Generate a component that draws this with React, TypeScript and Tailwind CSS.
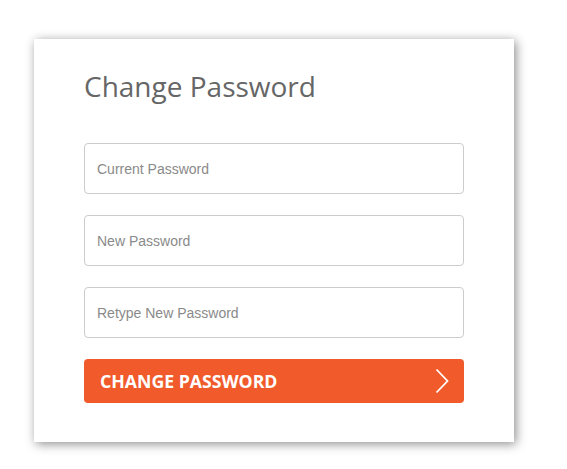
const fields = ["Current Password", "New Password", "Retype New Password"];

const App = () => {
    return (
        <div className="min-h-[469px] w-[567px] bg-white pt-[39px] pl-[34px]">
            <div className="w-[480px] bg-white px-[50px] pt-[28px] pb-[39px] shadow-[2px_2px_10px_rgba(0,0,0,0.45)]">
                <h1 className="font-['Open_Sans',sans-serif] text-[28px] leading-[38px] text-[#666666]">
                    Change Password
                </h1>
                <form className="mt-[38px] flex flex-col gap-[21px]">
                    {fields.map((f) => (
                        <input
                            key={f}
                            type="password"
                            placeholder={f}
                            className="h-[51px] w-full rounded-[4px] border border-[#cccccc] px-3 font-['Liberation_Sans',Arial,sans-serif] text-[14px] text-[#555] placeholder:text-[#8a8a8a] focus:outline-none"
                        />
                    ))}
                    <button
                        type="button"
                        className="flex h-[44px] w-full items-center justify-between rounded-[4px] bg-[#f15a2b] pl-4 pr-[15px] font-['Open_Sans',sans-serif] text-[17.7px] font-bold text-white"
                    >
                        CHANGE PASSWORD
                        <svg width="14" height="26" viewBox="0 0 14 26" fill="none">
                            <path d="M1.5 1.5 L12.5 13 L1.5 24.5" stroke="white" strokeWidth="1.8" />
                        </svg>
                    </button>
                </form>
            </div>
        </div>
    );
};

export default App;
